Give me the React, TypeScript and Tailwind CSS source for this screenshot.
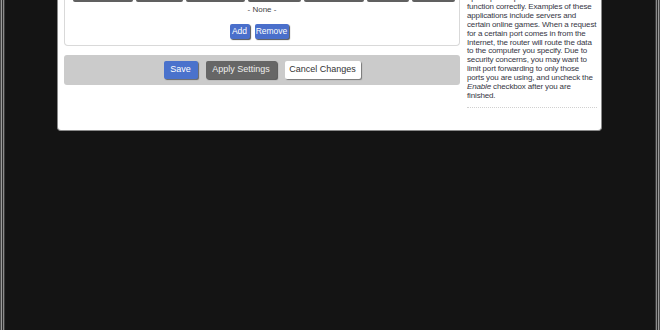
import React from "react";

const font = { fontFamily: '"Liberation Sans", Arial, sans-serif' };

function Stripe({ mirror }: { mirror?: boolean }) {
  const cols = ["bg-[#4a4a4a]", "bg-[#9a9a9a]", "bg-[#2e2e2e]", "bg-[#8a8a8a]", "bg-[#3a3a3a]"];
  const list = mirror ? [...cols].reverse() : cols;
  return (
    <div className="flex h-full shrink-0">
      {list.map((c, i) => (
        <div key={i} className={`w-px h-full ${c}`} />
      ))}
    </div>
  );
}

const cells = [60, 47, 59, 53, 60, 42, 43];

const lines: React.ReactNode[] = [
  "open specific ports in order for it to",
  "function correctly. Examples of these",
  "applications include servers and",
  "certain online games. When a request",
  "for a certain port comes in from the",
  "Internet, the router will route the data",
  "to the computer you specify. Due to",
  "security concerns, you may want to",
  "limit port forwarding to only those",
  "ports you are using, and uncheck the",
  <>
    <i>Enable</i> checkbox after you are
  </>,
  "finished.",
];

export default function App() {
  return (
    <div className="w-[660px] h-[330px] bg-[#141414] flex overflow-hidden" style={font}>
      <Stripe />
      <div className="flex-1 pl-[52px]">
        <div className="w-[545px] h-[131px] bg-white rounded-b-[4px] border-b border-x border-[#8a8a8a] flex pl-[6px] gap-[7px] overflow-hidden">
          <div className="w-[396px] shrink-0 flex flex-col">
            <div className="h-[46px] border-x border-b border-[#d9d9d9] rounded-b-[4px] flex flex-col">
              <div className="flex gap-[3px] pl-[8px]">
                {cells.map((w, i) => (
                  <div key={i} className="h-[2px] bg-[#606060] rounded-b-[2px]" style={{ width: w }} />
                ))}
              </div>
              <div className="text-center text-[8px] leading-[10px] text-[#444] mt-[3px]">- None -</div>
              <div className="flex justify-center gap-[5px] mt-[9px] pr-[6px]">
                <button className="h-[15px] w-[20px] bg-[#4a6fcb] text-white text-[8.5px] leading-[15px] rounded-[2px] shadow-[1px_1px_1px_#555]">Add</button>
                <button className="h-[15px] w-[34px] bg-[#4a6fcb] text-white text-[8.5px] leading-[15px] rounded-[2px] shadow-[1px_1px_1px_#555]">Remove</button>
              </div>
            </div>
            <div className="mt-[9px] h-[30px] bg-[#cbcbcb] rounded-[3px] flex items-center justify-center gap-[8px]">
              <button className="h-[18px] w-[34px] bg-[#4a72cc] text-white text-[9px] rounded-[2px] shadow-[1px_1px_1px_#666]">Save</button>
              <button className="h-[18px] w-[71px] bg-[#666666] text-[#eee] text-[9px] rounded-[2px] shadow-[1px_1px_1px_#555]">Apply Settings</button>
              <button className="h-[18px] w-[76px] bg-white text-[#333] text-[9px] rounded-[2px] shadow-[1px_1px_1px_#777]">Cancel Changes</button>
            </div>
          </div>
          <div className="w-[134px] shrink-0 flex flex-col">
            <div className="text-[8px] leading-[8.9px] tracking-[-0.15px] text-[#363644] mt-[-6px]">
              {lines.map((l, i) => (
                <div key={i} className="whitespace-nowrap">
                  {l}
                </div>
              ))}
            </div>
            <div className="mt-[6px] w-[130px] border-t border-dotted border-[#d0d0d0]" />
          </div>
        </div>
      </div>
      <Stripe mirror />
    </div>
  );
}
